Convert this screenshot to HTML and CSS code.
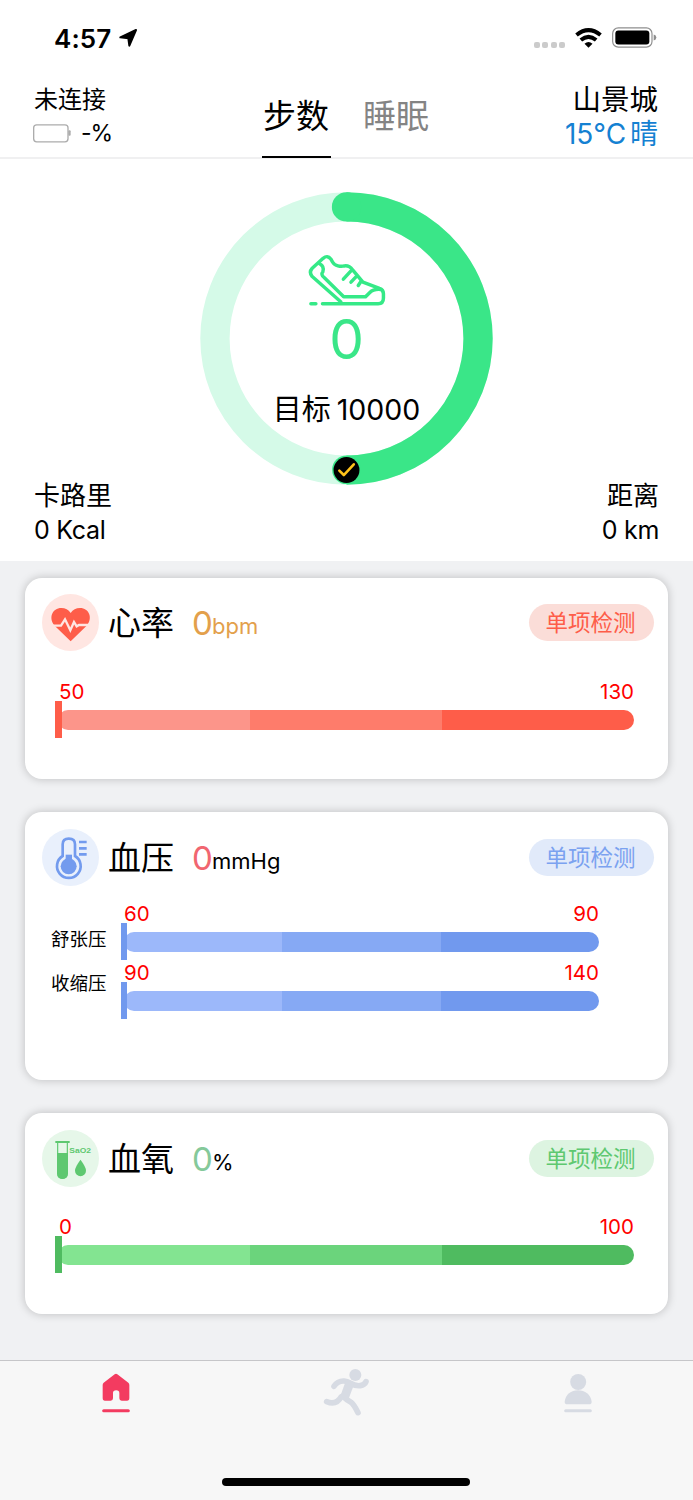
FILE: index.html
```html
<!DOCTYPE html>
<html lang="zh-CN">
<head>
<meta charset="utf-8">
<title>步数</title>
<link rel="stylesheet" href="styles.css">
</head>
<body>
<div class="screen">
  <div class="status">
    <div class="clock">4:57</div>
    <svg class="locate" viewBox="0 0 54 54"><path d="M51 3 L31 50 L28 28 L4 25 Z" fill="#000" stroke="#000" stroke-width="6" stroke-linejoin="round"/></svg>
    <div class="signal"><i></i><i></i><i></i><i></i></div>
    <svg class="wifi" viewBox="0 0 80 60"><g fill="none" stroke="#000" stroke-width="12"><path d="M4 21 Q40 -8 76 21"/><path d="M17 36 Q40 17 63 36"/></g><path d="M40 59 L28 47 Q40 37 52 47 Z"/></svg>
    <svg class="battery" viewBox="0 0 135 62"><rect x="2" y="2" width="118" height="58" rx="17" fill="none" stroke="#8e8e8e" stroke-width="3.5"/><rect x="10" y="10" width="102" height="42" rx="9"/><path d="M125 22 Q133 24 133 31 Q133 38 125 40Z" fill="#8e8e8e"/></svg>
  </div>
  <header class="top">
    <div class="device">
      <div class="link">未连接</div>
      <div class="charge"><svg viewBox="0 0 114 56"><rect x="2" y="2" width="103" height="51" rx="9" fill="none" stroke="#acacac" stroke-width="4"/><rect x="106" y="18" width="7" height="17" rx="3" fill="#acacac"/></svg><span>-%</span></div>
    </div>
    <nav class="tabs"><div class="tab active">步数</div><div class="tab">睡眠</div></nav>
    <div class="weather"><div class="city">山景城</div><div class="temp"><span>15°C</span><span>晴</span></div></div>
  </header>

  <section class="steps">
    <div class="ring">
      <svg class="dial" viewBox="0 0 294 294">
        <circle cx="147" cy="147" r="132" fill="none" stroke="#d5fae8" stroke-width="29.4"/>
        <path d="M147 15 A132 132 0 0 1 147 279" fill="none" stroke="#3ae688" stroke-width="29.4"/>
        <circle cx="147" cy="15" r="14.7" fill="#3ae688"/><circle cx="147" cy="278.7" r="14.4" fill="#3ae688"/>
        <circle cx="147" cy="279" r="13" fill="#000"/>
        <path d="M139.8 279.5 L144.3 284 L154.3 273.2" fill="none" stroke="#ffc21a" stroke-width="2.6" stroke-linecap="round" stroke-linejoin="round"/>
      </svg>
      <div class="ring-body">
        <svg class="shoe" viewBox="50 40 240 160" fill="none" stroke="#35e987" stroke-width="10.5" stroke-linecap="round" stroke-linejoin="round">
          <path d="M96 193H264Q280 193 280 176V163Q280 151 268 147L218 128L187 91Q177 77 162 79C151 82 133 79 127 68L121 58Q111 45 98 56L65 86Q54 98 65 111L151 187"/>
          <path d="M85 71Q103 80 97 97Q90 105 101 114L160 172H226L239 159Q250 148 272 150"/>
          <path d="M182 94L159 119M197 112L182 128M212 126L204 138"/>
          <path d="M61 193H76"/>
        </svg>
        <div class="count">0</div>
        <div class="goal"><span>目标</span><span class="num">10000</span></div>
      </div>
    </div>
    <div class="totals">
      <div><div>卡路里</div><div class="qty">0 Kcal</div></div>
      <div class="right"><div>距离</div><div class="qty">0 km</div></div>
    </div>
  </section>

  <main class="cards">
    <article class="card heart">
      <div class="card-head">
        <svg class="badge" viewBox="0 0 171 171"><circle cx="85.5" cy="85.5" r="85.5" fill="#ffe6e2"/><path d="M86 142 L38 95 C18 72 31 42 58 42 Q76 42 86 57 Q96 42 114 42 C141 42 154 72 134 95 Z" fill="#fe5d49"/><path d="M24 95H57L69 76L85 109L96 84L104 97L111 93H148" fill="none" stroke="#ffe6e2" stroke-width="7"/></svg>
        <h2>心率</h2><div class="value">0</div><div class="unit">bpm</div><button class="check">单项检测</button>
      </div>
      <div class="scale"><div class="ends"><span>50</span><span>130</span></div><div class="track"><b></b><div class="bar"><i></i><i></i><i></i></div></div></div>
    </article>

    <article class="card pressure">
      <div class="card-head">
        <svg class="badge" viewBox="0 0 171 171"><circle cx="85.5" cy="85.5" r="85.5" fill="#e9f0fc"/><path d="M62 81V46Q62 29 80.500 29Q99 29 99 46V81A35.500 35.500 0 1 1 62 81Z" fill="none" stroke="#739bee" stroke-width="8"/><circle cx="80" cy="112" r="24" fill="#739bee"/><rect x="71" y="77" width="19" height="25" fill="#739bee"/><path d="M111 39H134M111 58H134M111 76H134" stroke="#739bee" stroke-width="8"/></svg>
        <h2>血压</h2><div class="value">0</div><div class="unit">mmHg</div><button class="check">单项检测</button>
      </div>
      <div class="pairs">
        <div class="names"><div>舒张压</div><div>收缩压</div></div>
        <div class="scales">
          <div class="scale"><div class="ends"><span>60</span><span>90</span></div><div class="track"><b></b><div class="bar"><i></i><i></i><i></i></div></div></div>
          <div class="scale"><div class="ends"><span>90</span><span>140</span></div><div class="track"><b></b><div class="bar"><i></i><i></i><i></i></div></div></div>
        </div>
      </div>
    </article>

    <article class="card oxygen">
      <div class="card-head">
        <svg class="badge" viewBox="0 0 171 171"><circle cx="85.5" cy="85.5" r="85.5" fill="#e6f7e9"/><path d="M47 37V129Q47 145 61 145Q76 145 76 129V37" fill="none" stroke="#5ec870" stroke-width="3.500"/><path d="M40 36H83" stroke="#5ec870" stroke-width="6"/><path d="M45 69H78V130Q76 147 61.500 147Q47 147 45 130Z" fill="#5ec870"/><path d="M115.500 89Q132 111 132 122A16.500 16.500 0 0 1 99 122Q99 111 115.500 89Z" fill="#5ec870"/><text class="formula" x="82" y="69" textLength="65" lengthAdjust="spacingAndGlyphs" fill="#5ec870">SaO2</text></svg>
        <h2>血氧</h2><div class="value">0</div><div class="unit">%</div><button class="check">单项检测</button>
      </div>
      <div class="scale"><div class="ends"><span>0</span><span>100</span></div><div class="track"><b></b><div class="bar"><i></i><i></i><i></i></div></div></div>
    </article>
  </main>

  <footer class="tabbar">
    <div class="icons">
      <svg viewBox="0 0 150 150"><path d="M75 20Q77 20 79 22L112 47Q115 50 115 54V93Q115 101 108 101H92Q85 101 85 94V78Q85 70 75.500 70Q66 70 66 78V94Q66 101 59 101H42Q35 101 35 93V54Q35 50 38 47L71 22Q73 20 75 20Z" fill="#f33b60"/><path d="M38 131H112" stroke="#f33b60" stroke-width="9" stroke-linecap="round"/></svg>
      <svg viewBox="0 0 150 150"><g fill="none" stroke="#d7dbe3" stroke-width="17" stroke-linecap="round" stroke-linejoin="round"><path d="M36 58Q47 41 66 42Q76 43 84 48Q101 58 115 56Q128 54 132 44"/><path d="M14 104Q43 116 58 89L62 87Q75 100 87 106Q96 113 108 137"/></g><path d="M72 40L97 50L80 95L54 90Z" fill="#d7dbe3"/><circle cx="100" cy="24" r="18" fill="#d7dbe3"/></svg>
      <svg viewBox="0 0 150 150"><circle cx="75.500" cy="45" r="24" fill="#d7dbe3"/><path d="M43 112Q35 112 35 104C38 82 54 70 75 70C96 70 113 82 116 104Q116 112 108 112Z" fill="#d7dbe3"/><path d="M38 131H112" stroke="#d7dbe3" stroke-width="9" stroke-linecap="round"/></svg>
    </div>
    <div class="home-indicator"></div>
  </footer>
</div>
</body>
</html>
```
FILE: styles.css
```css
* { box-sizing: border-box; }
body { margin: 0; font-family: Inter, "Noto Sans CJK SC", sans-serif; color: #000; }
svg { display: block; flex: none; }
.screen { width: 693px; height: 1500px; background: #f0f1f3; display: flex; flex-direction: column; overflow: hidden; }

.status { height: 76px; background: #fff; display: flex; padding: 0 36px 0 54px; flex: none; }
.clock { font-size: 26px; font-weight: 600; line-height: 78px; width: 65px; letter-spacing: 0.1px; }
.locate { width: 18px; height: 18px; margin-top: 29px; }
.signal { display: flex; gap: 2.5px; margin: 42px 10px 0 auto; }
.signal i { width: 6px; height: 6px; border-radius: 2px; background: #cbcbcb; }
.wifi { width: 27px; height: 20px; margin: 28px 10px 0 0; }
.battery { width: 45px; height: 21px; margin-top: 27px; }

.top { height: 83px; background: #fff; border-bottom: 2px solid #f0f0f1; display: flex; justify-content: space-between; padding: 0 35px 0 34px; flex: none; }
.device { width: 180px; padding-top: 7px; }
.link { font-size: 24px; line-height: 34px; }
.charge { display: flex; align-items: center; line-height: 32px; font-size: 23px; letter-spacing: -1px; }
.charge svg { width: 38px; height: 19px; margin: 0 10px 0 -1px; }
.tabs { display: flex; gap: 31px; }
.tab { height: 82px; width: 69px; text-align: center; font-size: 33px; line-height: 81px; color: #848484; white-space: nowrap; }
.tab.active { color: #000; border-bottom: 2px solid #000; }
.weather { width: 180px; text-align: right; padding-top: 7px; }
.city { font-size: 28.500px; line-height: 34px; }
.temp { color: #1581d2; font-size: 28px; line-height: 34px; display: flex; justify-content: flex-end; gap: 4px; }
.temp span:first-child { font-size: 28px; letter-spacing: -0.1px; }

.steps { height: 402px; background: #fff; display: flex; flex-direction: column; align-items: center; padding-top: 33px; flex: none; }
.ring { width: 293px; height: 293px; display: grid; flex: none; }
.dial, .ring-body { grid-area: 1 / 1; }
.dial { width: 293px; height: 293px; }
.ring-body { display: flex; flex-direction: column; align-items: center; padding-top: 61px; }
.shoe { width: 80px; height: 53px; }
.count { color: #3ae688; font-size: 55px; font-weight: 400; line-height: 60px; margin-top: 2.500px; }
.goal { display: flex; gap: 6px; font-size: 29px; line-height: 40px; margin-top: 21px; }
.goal .num { font-size: 28.500px; letter-spacing: 0; }
.totals { width: 100%; padding: 0 34px; margin-top: -7px; display: flex; justify-content: space-between; font-size: 26px; line-height: 35px; }
.qty { font-size: 25px; letter-spacing: -0.3px; }
.right { text-align: right; }

.cards { flex: 1; display: flex; flex-direction: column; gap: 33px; padding: 17px 25px 0; }
.card { background: #fff; border-radius: 17px; box-shadow: 0 0 10px rgba(0, 0, 0, 0.22); height: 201px; padding: 17px 14px 0 17px; flex: none; }
.card-head { display: flex; align-items: center; height: 57px; white-space: nowrap; }
.badge { width: 57px; height: 57px; }
h2 { margin: 2px 0 0 9px; width: 85px; font-size: 33px; font-weight: 400; line-height: 59px; }
.value { font-size: 33px; font-weight: 400; line-height: 57px; width: 19px; margin-top: 2px; display: flex; justify-content: center; }
.unit { font-size: 22px; line-height: 57px; padding-top: 8px; }
.check { margin-left: auto; width: 125px; height: 37px; border: 0; border-radius: 19px; padding: 0 2px 0 0; font: 22.500px/37px Inter, "Noto Sans CJK SC", sans-serif; }
.formula { font: 700 24px "Liberation Sans", sans-serif; }

.scale { margin: 30px 20px 0 13px; }
.ends { display: flex; justify-content: space-between; color: #f00; font-size: 20.500px; line-height: 20px; padding: 0 0 0 4px; height: 19px; }
.track { display: flex; align-items: center; height: 37px; }
.track b { width: 7px; height: 37px; background: var(--c3); z-index: 1; }
.bar { flex: 1; height: 20px; margin-left: -4px; border-radius: 10px; overflow: hidden; display: flex; }
.bar i { flex: 1; background: var(--c1); }
.bar i + i { background: var(--c2); }
.bar i + i + i { background: var(--c3); }

.heart { --c1: #fc958a; --c2: #fe7c6b; --c3: #fe5d49; padding-top: 16px; }
.heart .scale { margin-top: 31px; }
.heart .value, .heart .unit { color: #e3a04b; }
.heart .check { color: #fe5d49; background: #fbddd8; }
.pressure { --c1: #9cb8fa; --c2: #86a9f4; --c3: #7199ee; height: 268px; }
.pressure .value { color: #f16670; }
.pressure .check { color: #7ba2f0; background: #e1eafa; }
.oxygen { --c1: #83e491; --c2: #6bd47c; --c3: #4fbb60; }
.oxygen .value { color: #85c99a; }
.oxygen .check { color: #5ec870; background: #ddf4e1; }
.pairs { display: flex; }
.names { width: 79px; padding: 31px 0 0 9px; font-size: 18.500px; line-height: 44px; }
.scales { flex: 1; padding: 18px 55px 0 0; }
.scales .scale { margin: 0 0 3px; }
.scales .track b { width: 6px; }
.scales .bar { margin-left: -3px; }
.scales .ends { padding-left: 3px; }

.tabbar { height: 140px; background: #f7f7f7; border-top: 1px solid #c6c6c9; display: flex; flex-direction: column; align-items: center; flex: none; }
.icons { width: 100%; display: grid; grid-template-columns: repeat(3, 1fr); justify-items: center; padding-top: 5.500px; }
.icons svg { width: 50px; height: 50px; }
.home-indicator { width: 248px; height: 8px; border-radius: 4px; background: #000; margin: 61.500px 1px 0 0; }
```
